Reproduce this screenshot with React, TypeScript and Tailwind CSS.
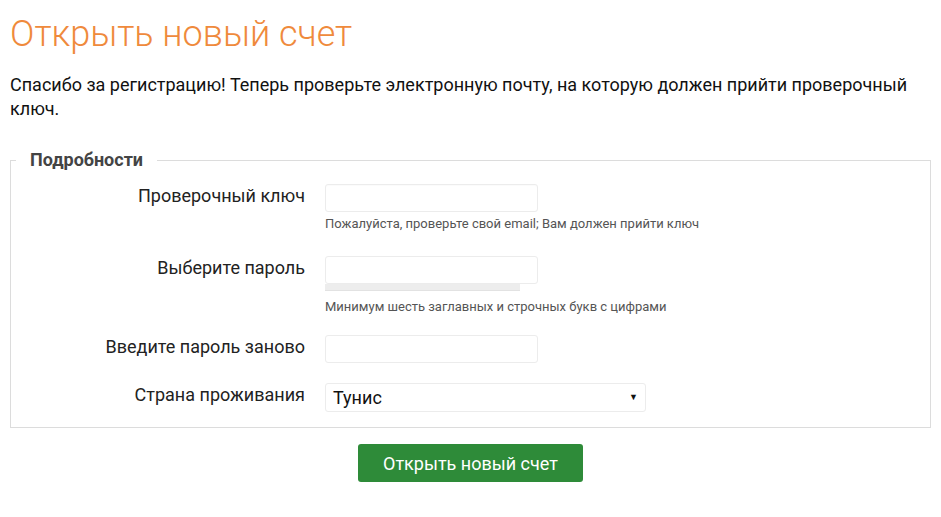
import React from "react";

export default function App() {
  return (
    <div className="min-h-[517px] bg-white px-[10px] text-[#111]" style={{ fontFamily: "Roboto, 'Noto Sans', sans-serif" }}>
      <h1 className="pt-[14px] text-[36px] font-light leading-[40px] text-[#ef8a3c]">Открыть новый счет</h1>
      <p className="mt-[19px] text-[18px] leading-[24px] text-[#111]">
        Спасибо за регистрацию! Теперь проверьте электронную почту, на которую должен прийти проверочный ключ.
      </p>
      <fieldset className="mt-[27px] border border-[#dcdcdc] pl-[5px] pr-[5px] pb-[15px] pt-0">
        <legend className="px-[14px] text-[18px] font-bold leading-[24px] text-[#444]">Подробности</legend>
        <div className="pt-[12px]">
          <div className="grid grid-cols-[289px_1fr] gap-x-[20px]">
            <label className="text-right text-[18px] leading-[24px] text-[#222]">Проверочный ключ</label>
            <div>
              <div className="h-[28px] w-[213px] rounded-[3px] border border-[#ececec] bg-white shadow-[inset_0_1px_1px_rgba(0,0,0,0.02)]" />
              <div className="mt-[3px] text-[13px] leading-[18px] text-[#555]">Пожалуйста, проверьте свой email; Вам должен прийти ключ</div>
            </div>
          </div>
          <div className="mt-[23px] grid grid-cols-[289px_1fr] gap-x-[20px]">
            <label className="text-right text-[18px] leading-[24px] text-[#222]">Выберите пароль</label>
            <div>
              <div className="h-[28px] w-[213px] rounded-[3px] border border-[#ececec] bg-white" />
              <div className="h-[6px] w-[195px] bg-[#ededed] shadow-[0_1px_0_#e2e2e2]" />
              <div className="mt-[8px] text-[13px] leading-[18px] text-[#555]">Минимум шесть заглавных и строчных букв с цифрами</div>
            </div>
          </div>
          <div className="mt-[19px] grid grid-cols-[289px_1fr] gap-x-[20px]">
            <label className="text-right text-[18px] leading-[24px] text-[#222]">Введите пароль заново</label>
            <div>
              <div className="h-[28px] w-[213px] rounded-[3px] border border-[#ececec] bg-white" />
            </div>
          </div>
          <div className="mt-[20px] grid grid-cols-[289px_1fr] gap-x-[20px]">
            <label className="text-right text-[18px] leading-[24px] text-[#222]">Страна проживания</label>
            <div>
              <div className="flex h-[29px] w-[321px] items-center justify-between rounded-[3px] border border-[#ececec] bg-white pl-[7px] pr-[7px]">
                <span className="text-[18px] leading-[27px] text-[#111]">Тунис</span>
                <span className="text-[9px] leading-none text-[#111]">▼</span>
              </div>
            </div>
          </div>
        </div>
      </fieldset>
      <div className="mt-[16px] flex justify-center">
        <button className="h-[38px] w-[225px] rounded-[3px] bg-[#2e8b39] text-[18px] text-white">Открыть новый счет</button>
      </div>
    </div>
  );
}
